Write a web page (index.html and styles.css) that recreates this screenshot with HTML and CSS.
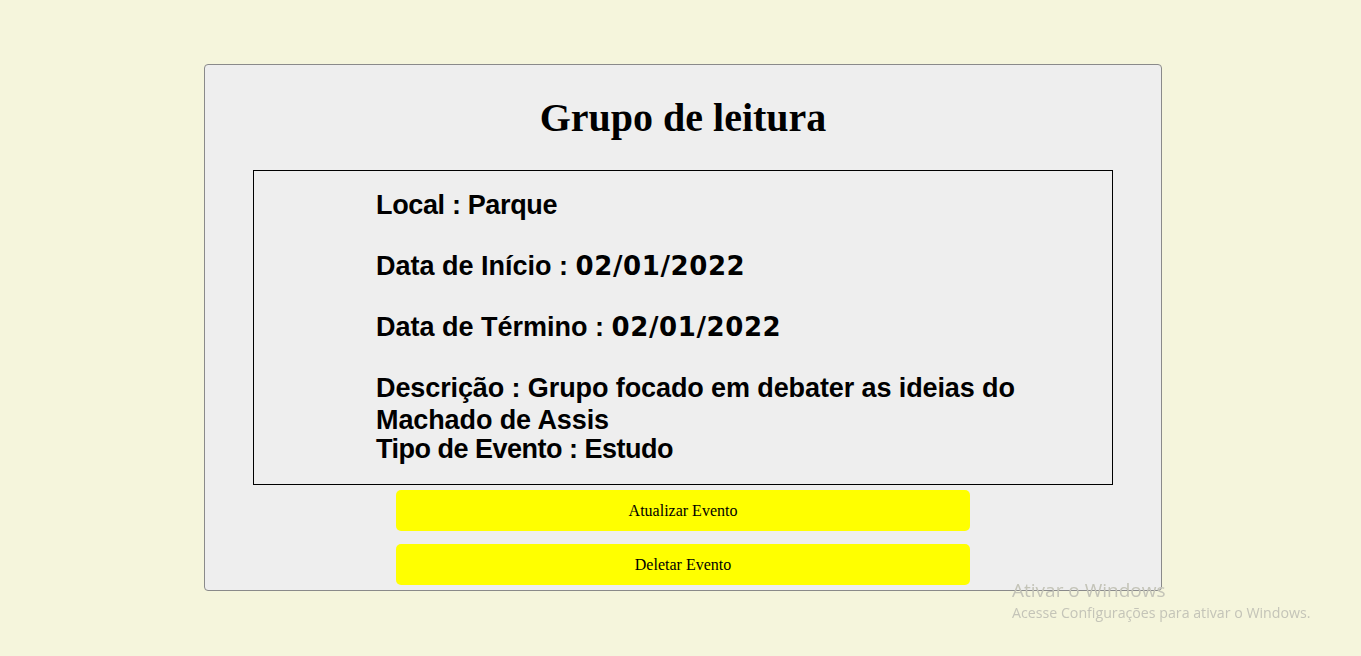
FILE: index.html
```html
<!DOCTYPE html>
<html lang="pt-BR">
<head>
<meta charset="utf-8">
<title>Grupo de leitura</title>
<link rel="stylesheet" href="styles.css">
</head>
<body>
<div class="page">
  <div class="card">
    <h1 class="title">Grupo de leitura</h1>
    <div class="details">
      <p class="item item-short">Local : Parque</p>
      <p class="item">Data de Início : <span class="date">02/01/2022</span></p>
      <p class="item">Data de Término : <span class="date">02/01/2022</span></p>
      <p class="item item-desc">Descrição : Grupo focado em debater as ideias do Machado de Assis</p>
      <p class="item item-type">Tipo de Evento : Estudo</p>
    </div>
    <div class="actions">
      <button class="btn" type="button">Atualizar Evento</button>
      <button class="btn" type="button">Deletar Evento</button>
    </div>
  </div>
</div>
<div class="watermark">
  <div class="wm-title">Ativar o Windows</div>
  <div class="wm-sub">Acesse Configurações para ativar o Windows.</div>
</div>
</body>
</html>
```
FILE: styles.css
```css
html, body {
  margin: 0;
  padding: 0;
}
body {
  background: #f5f5dc;
  font-family: "Liberation Serif", "Times New Roman", serif;
  min-height: 656px;
}
.page {
  padding: 64px 0 0 5px;
}
.card {
  box-sizing: border-box;
  width: 958px;
  margin: 0 auto;
  background: #eeeeee;
  border: 1px solid #8a8a8a;
  border-radius: 4px;
  padding: 0 0 5px;
}
.title {
  margin: 30px 0 29px;
  font-family: "Liberation Serif", "Times New Roman", serif;
  font-weight: bold;
  font-size: 40px;
  line-height: 46px;
  text-align: center;
  color: #000;
}
.details {
  margin: 0 48px;
  border: 1px solid #000;
  padding: 18px 60px 19px 122px;
}
.item {
  margin: 0 0 29px;
  font-family: "Liberation Sans", Arial, sans-serif;
  font-weight: bold;
  font-size: 27px;
  line-height: 32px;
  color: #000;
}
.item-short {
  letter-spacing: -0.35px;
}
.date {
  font-family: "DejaVu Sans", "Liberation Sans", sans-serif;
  font-size: 26px;
  letter-spacing: 0.6px;
}
.item-desc {
  margin-bottom: 0;
  letter-spacing: -0.1px;
}
.item-type {
  margin: -3px 0 0;
  letter-spacing: -0.5px;
}
.actions {
  display: flex;
  flex-direction: column;
  align-items: center;
  gap: 13px;
  padding-top: 5px;
}
.btn {
  width: 574px;
  height: 41px;
  border: none;
  border-radius: 5px;
  background: #ffff00;
  font-family: "Liberation Serif", "Times New Roman", serif;
  font-size: 16px;
  color: #000;
  padding: 0;
}
.watermark {
  position: fixed;
  left: 1012px;
  top: 577px;
  color: #c4c4b8;
  font-family: "Open Sans", "Noto Sans", sans-serif;
}
.wm-title {
  font-size: 19px;
  line-height: 26px;
}
.wm-sub {
  font-size: 14.2px;
  line-height: 20px;
}
```
